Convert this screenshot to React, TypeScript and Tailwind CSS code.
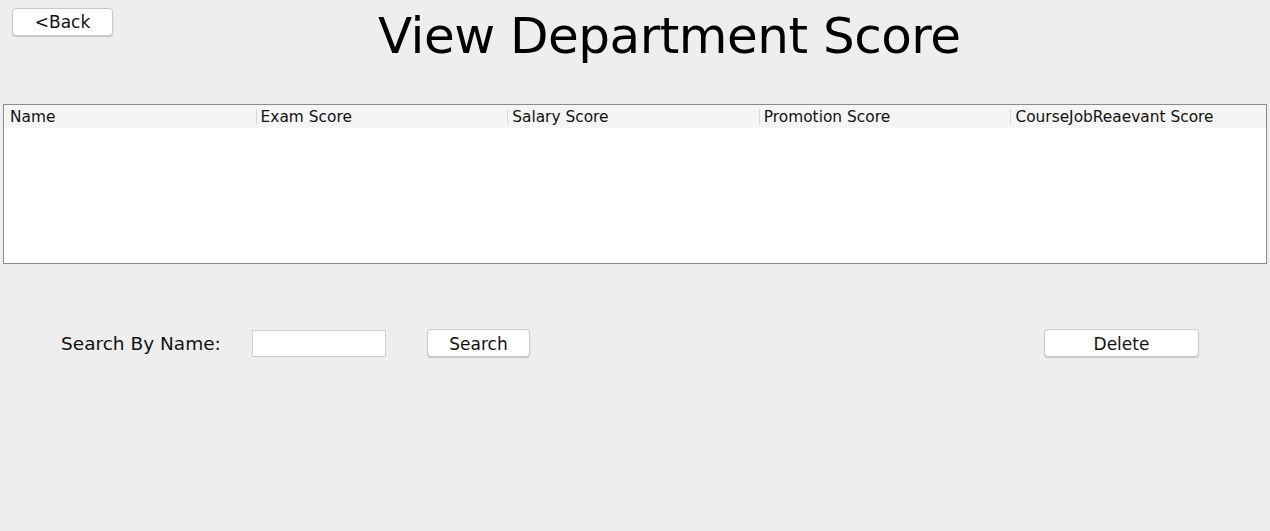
const font = { fontFamily: '"DejaVu Sans", "Open Sans", sans-serif' };

const columns = [
  "Name",
  "Exam Score",
  "Salary Score",
  "Promotion Score",
  "CourseJobReaevant Score",
];

function AquaButton({
  label,
  boxStyle = "",
}: {
  label: string;
  boxStyle?: string;
}) {
  return (
    <button
      className={
        "flex items-center justify-center rounded-[4px] border border-[#c9c9c9] bg-white pt-[2px] text-[17px] text-[#111111] shadow-[0_1px_1px_rgba(0,0,0,0.18)] " +
        boxStyle
      }
    >
      {label}
    </button>
  );
}

export default function App() {
  return (
    <div
      className="h-[531px] w-[1270px] overflow-hidden bg-[#eeeeee] text-black"
      style={font}
    >
      <div className="flex h-[104px] items-start">
        <AquaButton label="<Back" boxStyle="ml-[12px] mt-[8px] h-[28px] w-[101px]" />
        <h1 className="ml-[265px] mt-[6px] text-[50px] leading-[60px] tracking-[-0.5px]">
          View Department Score
        </h1>
      </div>

      <div className="mx-[3px] h-[160px] border border-[#8c8c8c] bg-white">
        <div className="grid h-[23px] grid-cols-5 bg-[#f5f5f5] pr-[4px]">
          {columns.map((c, i) => (
            <div key={c} className="flex items-center">
              {i > 0 && <span className="mr-[4px] h-[16px] w-px bg-[#d9d9d9]" />}
              <span
                className={
                  "pt-[3px] text-[15.4px] leading-none text-[#111111] " +
                  (i === 0 ? "pl-[6px]" : "")
                }
              >
                {c}
              </span>
            </div>
          ))}
        </div>
      </div>

      <div className="mt-[65px] flex items-center">
        <span className="ml-[61px] w-[191px] pt-[1px] text-[18.5px] text-[#111111]">
          Search By Name:
        </span>
        <input className="h-[27px] w-[134px] border border-[#d0d0d0] bg-white outline-none" />
        <AquaButton label="Search" boxStyle="ml-[41px] h-[28px] w-[103px]" />
        <AquaButton label="Delete" boxStyle="ml-[514px] h-[28px] w-[155px]" />
      </div>
    </div>
  );
}
